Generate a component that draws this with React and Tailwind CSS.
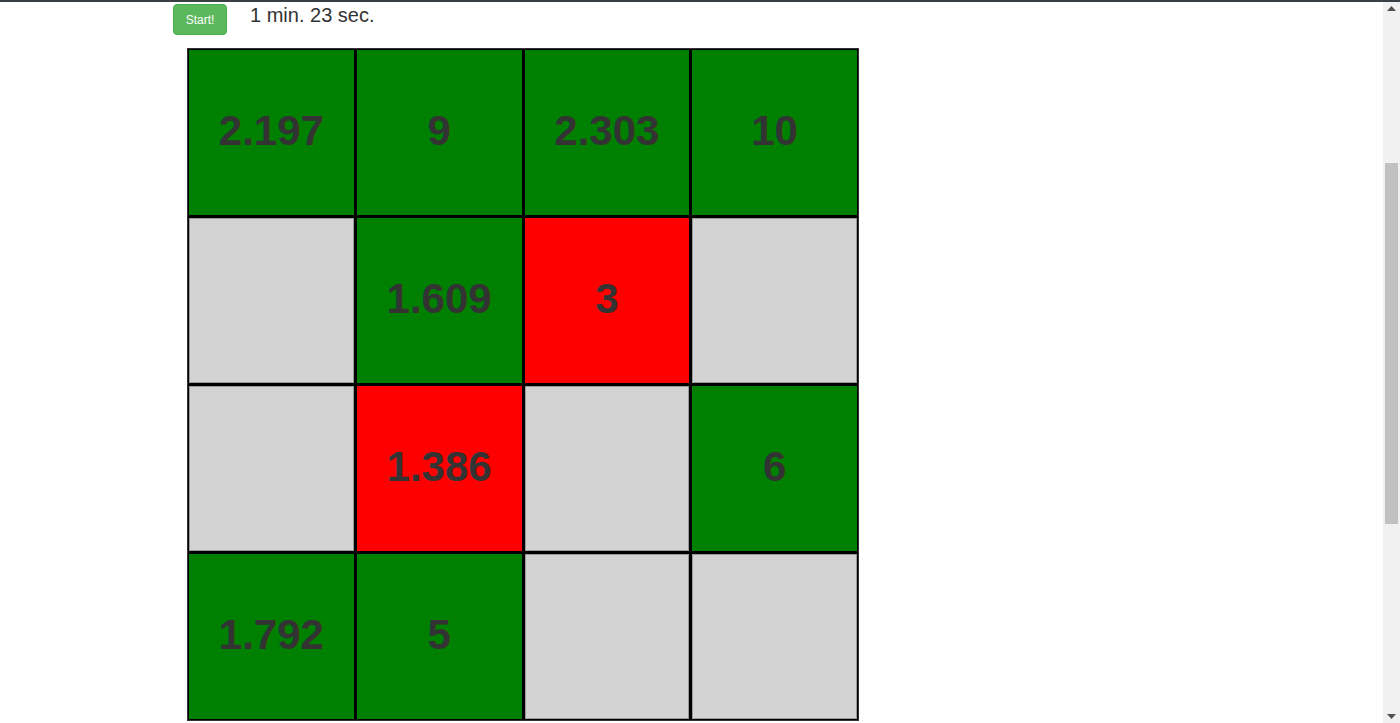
import React from "react";

const cells = [
  { v: "2.197", c: "green" },
  { v: "9", c: "green" },
  { v: "2.303", c: "green" },
  { v: "10", c: "green" },
  { v: "", c: "gray" },
  { v: "1.609", c: "green" },
  { v: "3", c: "red" },
  { v: "", c: "gray" },
  { v: "", c: "gray" },
  { v: "1.386", c: "red" },
  { v: "", c: "gray" },
  { v: "6", c: "green" },
  { v: "1.792", c: "green" },
  { v: "5", c: "green" },
  { v: "", c: "gray" },
  { v: "", c: "gray" },
];

const bg = {
  green: "bg-[#008000]",
  red: "bg-[#ff0000]",
  gray: "bg-[#d3d3d3]",
};

export default function App() {
  return (
    <div className="h-[723px] overflow-hidden bg-white font-['Liberation_Sans',Arial,sans-serif] text-[#333]">
      <div className="h-[2px] bg-[#3a3f44]" />
      <div className="pl-[173px] pt-[2px]">
        <div className="flex items-start">
          <button className="h-[31px] w-[54px] rounded-[4px] border border-[#4cae4c] bg-[#5cb85c] text-[12px] text-white">
            Start!
          </button>
          <span className="ml-[23px] -mt-[1px] text-[20px] leading-[24px]">1 min. 23 sec.</span>
        </div>
        <div className="ml-[14px] mt-[13px] w-[672px] border border-[#333] bg-black p-[1px]">
          <div className="grid grid-cols-4 gap-[3px]">
            {cells.map((cell, i) => (
              <div
                key={i}
                className={`flex h-[165px] items-center justify-center ${bg[cell.c]} ${cell.c === "gray" ? "shadow-[inset_0_0_0_1px_#9a9a9a]" : ""}`}
              >
                <span className="-mt-[4px] text-[42px] font-bold">{cell.v}</span>
              </div>
            ))}
          </div>
        </div>
      </div>

      {/* fake scrollbar */}
      <div className="fixed right-0 top-[2px] flex h-[721px] w-[17px] flex-col items-center bg-[#f1f1f1]">
        <svg width="9" height="5" viewBox="0 0 9 5" className="mt-[4px]">
          <polygon points="4.5,0 9,5 0,5" fill="#505050" />
        </svg>
        <div className="mt-[152px] h-[361px] w-[13px] bg-[#c1c1c1]" />
        <div className="flex-1" />
        <svg width="9" height="5" viewBox="0 0 9 5" className="mb-[4px]">
          <polygon points="0,0 9,0 4.5,5" fill="#505050" />
        </svg>
      </div>
    </div>
  );
}
